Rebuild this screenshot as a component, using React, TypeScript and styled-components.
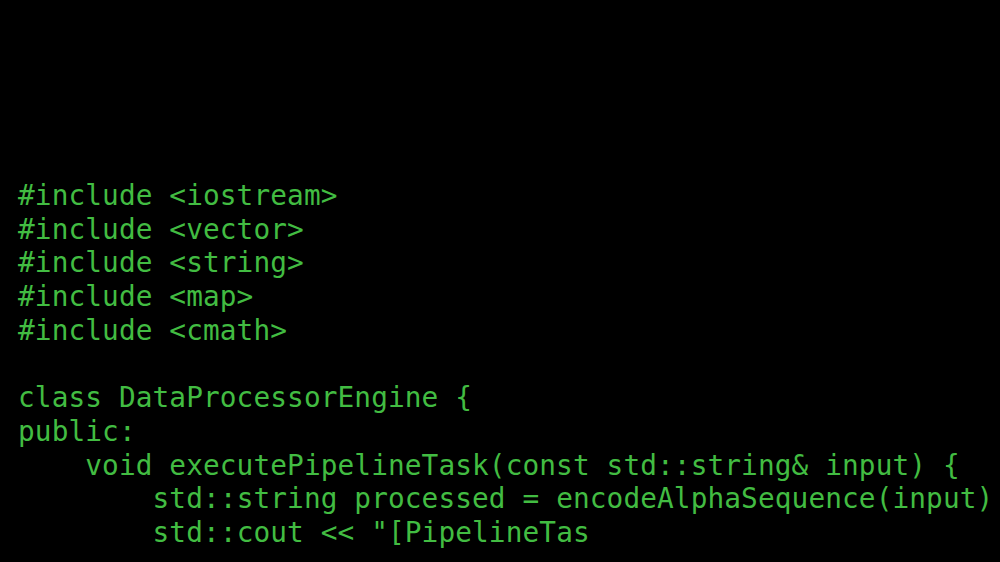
import React from "react";
import styled, { createGlobalStyle } from "styled-components";

const GlobalStyle = createGlobalStyle`
  html, body {
    margin: 0;
    padding: 0;
    background: #000;
  }
  #root {
    width: 1000px;
    height: 562px;
  }
`;

const Screen = styled.main`
  width: 1000px;
  height: 562px;
  background: #000;
  overflow: hidden;
  display: flex;
  flex-direction: column;
  padding: 179px 0 0 18px;
  box-sizing: border-box;
`;

const CodeBlock = styled.pre`
  margin: 0;
  font-family: "DejaVu Sans Mono", "Liberation Mono", monospace;
  font-size: 27.77px;
  letter-spacing: 0.1px;
  line-height: 33.7px;
  color: #42bc42;
  white-space: pre;
`;

const Line = styled.div<{ $indent?: number }>`
  height: 33.7px;
  padding-left: ${(p) => (p.$indent ?? 0) * 16.82}px;
`;

const lines: { indent: number; text: string }[] = [
  { indent: 0, text: "#include <iostream>" },
  { indent: 0, text: "#include <vector>" },
  { indent: 0, text: "#include <string>" },
  { indent: 0, text: "#include <map>" },
  { indent: 0, text: "#include <cmath>" },
  { indent: 0, text: "" },
  { indent: 0, text: "class DataProcessorEngine {" },
  { indent: 0, text: "public:" },
  { indent: 4, text: "void executePipelineTask(const std::string& input) {" },
  { indent: 8, text: "std::string processed = encodeAlphaSequence(input)" },
  { indent: 8, text: "std::cout << \"[PipelineTas" },
];

export default function App() {
  return (
    <>
      <GlobalStyle />
      <Screen>
        <CodeBlock>
          {lines.map((l, i) => (
            <Line key={i} $indent={l.indent}>
              {l.text}
            </Line>
          ))}
        </CodeBlock>
      </Screen>
    </>
  );
}
